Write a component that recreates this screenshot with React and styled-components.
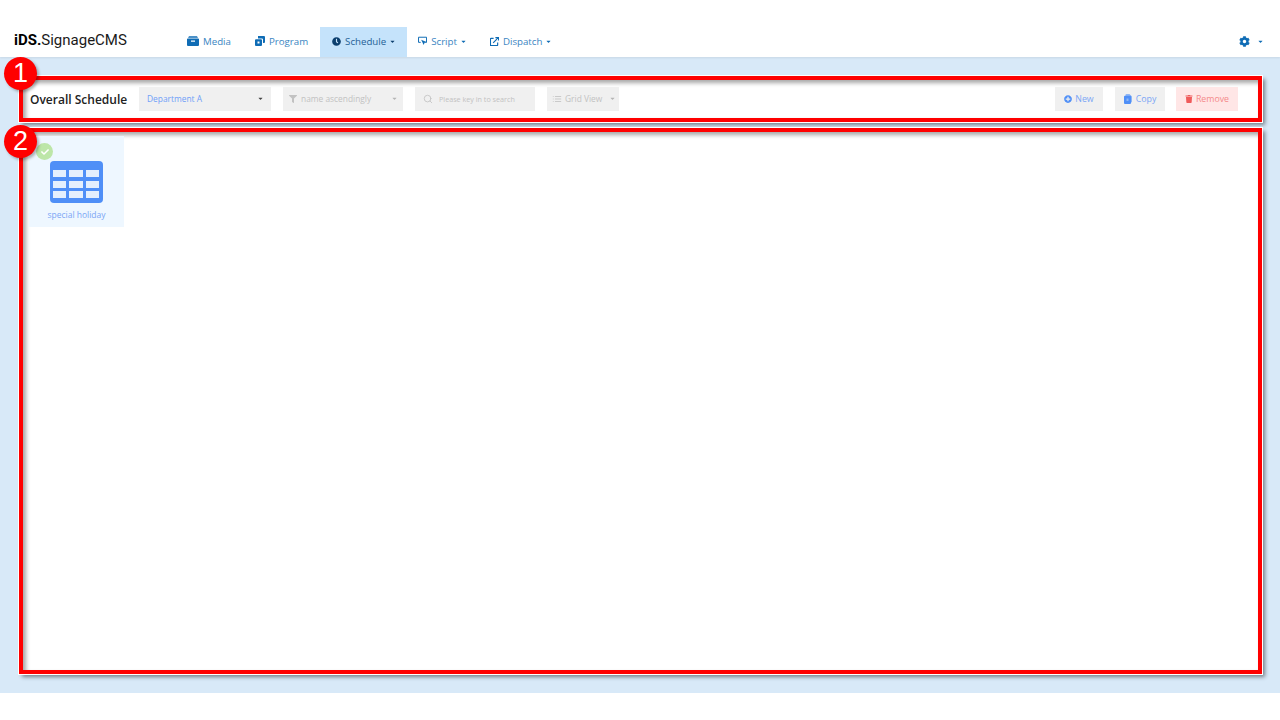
import React from "react";
import styled, { createGlobalStyle } from "styled-components";
import { FaCog, FaClock, FaFilter, FaPlusCircle, FaTrash, FaCheck, FaCaretDown } from "react-icons/fa";
import { FiSearch, FiList } from "react-icons/fi";

const Global = createGlobalStyle`
  html, body { margin: 0; padding: 0; background: #fff; }
  body { font-family: "Open Sans", "Noto Sans", "Liberation Sans", sans-serif; }
`;

const Page = styled.div`
  width: 1280px;
  height: 720px;
  display: flex;
  flex-direction: column;
  overflow: hidden;
`;

const Header = styled.header`
  height: 57px;
  padding: 27px 16px 0 14px;
  box-sizing: border-box;
  display: flex;
  align-items: stretch;
  background: #fff;
  box-shadow: 0 1px 2px rgba(0, 0, 0, 0.08);
  position: relative;
  z-index: 1;
`;

const Brand = styled.div`
  width: 161px;
  font-family: Roboto, "Liberation Sans", sans-serif;
  font-size: 15px;
  line-height: 27px;
  color: #1a1a1a;
  b { font-weight: 700; color: #000; }
`;

const Nav = styled.nav`
  display: flex;
  align-items: stretch;
  flex: 1;
`;

const NavItem = styled.div`
  display: flex;
  align-items: center;
  gap: 4px;
  padding: 0 ${(p) => p.$right || 12}px 2px ${(p) => p.$left || 12}px;
  font-size: 9.700px;
  color: ${(p) => (p.$active ? "#1f5f96" : "#3a85c2")};
  background: ${(p) => (p.$active ? "#c5e3fb" : "transparent")};
  svg.lead { color: ${(p) => (p.$active ? "#0c3f6e" : "#0f6cb5")}; flex: none; }
`;

const Caret = styled(FaCaretDown)`
  width: 7px;
  height: 7px;
  margin-left: ${(p) => p.$ml ?? 1}px;
  flex: none;
  color: ${(p) => p.$color || "#0f6cb5"};
`;

const Gear = styled.div`
  display: flex;
  align-items: center;
  gap: 6px;
  padding-bottom: 2px;
  color: #0f6cb5;
`;

const Main = styled.main`
  height: 636px;
  background: #d8e9f8;
  padding: 19px 18px 0 19px;
  box-sizing: border-box;
  display: flex;
  flex-direction: column;
  gap: 6px;
`;

const Marked = styled.section`
  position: relative;
  background: #fff;
  border: 4px solid #ff0000;
  box-sizing: border-box;
  outline: 1px solid #fff;
  box-shadow: 3px 3px 4px rgba(0, 0, 0, 0.45), inset 3px 3px 4px rgba(0, 0, 0, 0.35);
`;

const Toolbar = styled(Marked)`
  height: 46px;
  display: flex;
  align-items: center;
  padding: 0 20px 0 7px;
`;

const Title = styled.h1`
  margin: 0 11px 0 0;
  width: 98px;
  font-size: 12px;
  font-weight: 600;
  color: #222;
  white-space: nowrap;
`;

const Field = styled.div`
  width: ${(p) => p.$w}px;
  height: 24px;
  margin-right: 12px;
  padding: 0 ${(p) => p.$right || 7}px 1px ${(p) => p.$left || 7}px;
  box-sizing: border-box;
  display: flex;
  align-items: center;
  gap: ${(p) => p.$gap || 4}px;
  background: #f0f0f0;
  font-size: ${(p) => p.$size || 8.400}px;
  color: ${(p) => p.$color || "#c2c2c2"};
  white-space: nowrap;
  span { flex: 1; }
  svg { flex: none; }
`;

const Spacer = styled.div`
  flex: 1;
`;

const Action = styled.button`
  height: 24px;
  width: ${(p) => p.$w}px;
  margin-left: ${(p) => p.$ml}px;
  border: 0;
  padding: 0 0 1px;
  display: flex;
  align-items: center;
  justify-content: center;
  gap: 3px;
  font: 8.800px "Open Sans", sans-serif;
  background: ${(p) => (p.$danger ? "#ffe6e6" : "#f0f0f0")};
  color: ${(p) => (p.$danger ? "#f58a8a" : "#7ba6f5")};
  svg { color: ${(p) => (p.$danger ? "#f05a5a" : "#4f8ff7")}; flex: none; }
`;

const Content = styled(Marked)`
  height: 546px;
  padding: 4px 0 0 6px;
`;

const Card = styled.div`
  width: 95px;
  height: 91px;
  background: #eef7ff;
  position: relative;
  display: flex;
  flex-direction: column;
  align-items: center;
  padding-top: 25px;
  box-sizing: border-box;
  font-size: 8.500px;
  color: #7ba6f5;
`;

const CardLabel = styled.div`
  margin-top: 6px;
`;

const Check = styled.div`
  position: absolute;
  left: 7px;
  top: 7px;
  width: 17px;
  height: 17px;
  border-radius: 50%;
  background: #bde6a8;
  color: #fff;
  display: flex;
  align-items: center;
  justify-content: center;
`;

const Badge = styled.div`
  position: absolute;
  left: ${(p) => p.$l}px;
  top: ${(p) => p.$t}px;
  width: 33px;
  height: 33px;
  border-radius: 50%;
  background: #ff0000;
  color: #fff;
  font: 27px/33px "Liberation Sans", sans-serif;
  text-align: center;
  z-index: 3;
  box-shadow: 2px 2px 3px rgba(0, 0, 0, 0.3);
`;

const MediaIcon = () => (
  <svg className="lead" width="12" height="10" viewBox="0 0 12 10" fill="currentColor">
    <path d="M2 0h8l1 2H1z" opacity=".75" />
    <path fillRule="evenodd" d="M.8 2.500h10.400a.8.8 0 0 1 .8.8V9a1 1 0 0 1-1 1H1a1 1 0 0 1-1-1V3.300a.8.8 0 0 1 .8-.8zM4 4.500v1.200h4V4.500z" />
  </svg>
);
const ProgramIcon = () => (
  <svg className="lead" width="10" height="10" viewBox="0 0 10 10" fill="currentColor">
    <path d="M3 0h6a1 1 0 0 1 1 1v5a1 1 0 0 1-1 1H8V3.500a1 1 0 0 0-1-1H3z" />
    <path fillRule="evenodd" d="M1 3.200h5a1 1 0 0 1 1 1V9a1 1 0 0 1-1 1H1a1 1 0 0 1-1-1V4.200a1 1 0 0 1 1-1zM2.500 5.500v2h2v-2z" />
  </svg>
);
const ScriptIcon = () => (
  <svg className="lead" width="9" height="10" viewBox="0 0 10 10" fill="none" stroke="currentColor" strokeWidth="1.100">
    <path d="M8 6.500h1.500V.8H.6v5.700H3" />
    <path d="M3.500 3.500l6 2.500-2.200 1-1 2.500z" fill="currentColor" stroke="none" />
  </svg>
);
const DispatchIcon = () => (
  <svg className="lead" width="9" height="9" viewBox="0 0 10 10" fill="none" stroke="currentColor" strokeWidth="1.300">
    <path d="M4 1.500H1a.5.5 0 0 0-.500.5v7a.5.5 0 0 0 .5.500h7a.5.5 0 0 0 .5-.5V6" />
    <path d="M3.500 6.500 9 1M6 .6h3.400V4" />
  </svg>
);
const CopyIcon = () => (
  <svg width="9" height="10" viewBox="0 0 9 10" fill="currentColor">
    <path d="M2.500 0h3L8 2.500V7.500a1 1 0 0 1-1 1H2.500a1 1 0 0 1-1-1V1a1 1 0 0 1 1-1z" opacity=".6" />
    <path fillRule="evenodd" d="M1 1.800h5a1 1 0 0 1 1 1V9a1 1 0 0 1-1 1H1a1 1 0 0 1-1-1V2.800a1 1 0 0 1 1-1zM2.500 4.500v2.500h2V4.500z" />
  </svg>
);
const TableIcon = () => (
  <svg width="53" height="42" viewBox="0 0 53 42">
    <rect width="53" height="42" rx="4" fill="#4f8ff7" />
    {[9, 20, 30].map((y) =>
      [[3, 13], [19, 14], [36, 13]].map(([x, w]) => (
        <rect key={`${x}-${y}`} x={x} y={y} width={w} height="7" fill="#e4effd" />
      ))
    )}
  </svg>
);

export default function App() {
  return (
    <Page>
      <Global />
      <Header>
        <Brand><b>iDS.</b>SignageCMS</Brand>
        <Nav>
          <NavItem><MediaIcon />Media</NavItem>
          <NavItem><ProgramIcon />Program</NavItem>
          <NavItem $active $right={11}><FaClock className="lead" size={9} />Schedule<Caret $ml={-1} $color="#0c3f6e" /></NavItem>
          <NavItem $left={11} $right={11}><ScriptIcon />Script<Caret $ml={-1} /></NavItem>
          <NavItem><DispatchIcon />Dispatch<Caret $ml={-1} /></NavItem>
        </Nav>
        <Gear><FaCog size={11} /><Caret /></Gear>
      </Header>
      <Main>
        <Toolbar>
          <Badge $l={-19} $t={-23}>1</Badge>
          <Title>Overall Schedule</Title>
          <Field $w={132} $left={8} $color="#6f9ff8">
            <span>Department A</span><Caret $color="#444" />
          </Field>
          <Field $w={120} $left={6} $right={5}>
            <FaFilter size={8} /><span>name ascendingly</span><Caret $color="#b5b5b5" />
          </Field>
          <Field $w={120} $size={7.200} $left={8} $gap={6}>
            <FiSearch size={10} /><span>Please key in to search</span>
          </Field>
          <Field $w={72} $left={5} $gap={3} $right={3}>
            <FiList size={10} /><span>Grid View</span><Caret $color="#b5b5b5" />
          </Field>
          <Spacer />
          <Action $w={48} $ml={0}><FaPlusCircle size={8} />New</Action>
          <Action $w={50} $ml={12}><CopyIcon />Copy</Action>
          <Action $w={62} $ml={11} $danger><FaTrash size={8} />Remove</Action>
        </Toolbar>
        <Content>
          <Badge $l={-19} $t={-7}>2</Badge>
          <Card>
            <Check><FaCheck size={8} /></Check>
            <TableIcon />
            <CardLabel>special holiday</CardLabel>
          </Card>
        </Content>
      </Main>
    </Page>
  );
}
